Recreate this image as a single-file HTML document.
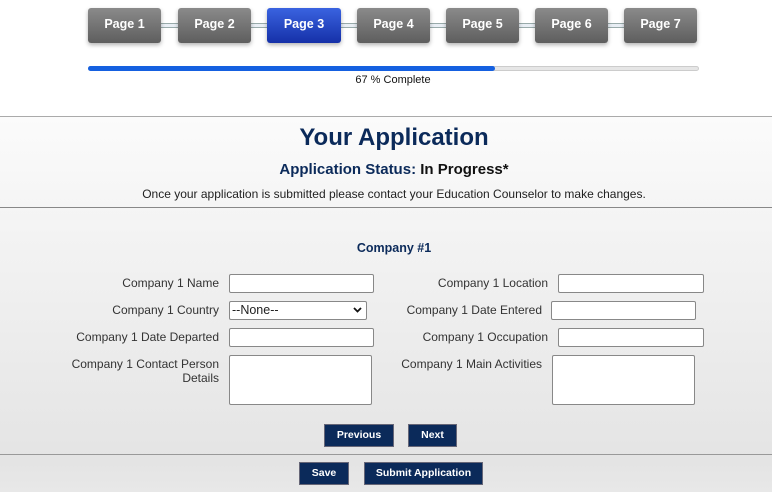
<!DOCTYPE html>
<html><head><style>
*{box-sizing:border-box;margin:0;padding:0}
body{width:772px;height:492px;position:relative;background:#fff;font-family:"Liberation Sans",Arial,sans-serif;overflow:hidden;color:#222}
.pg{position:absolute;top:8px;width:73px;height:35px;border-radius:3px;background:linear-gradient(#8a8a8a,#5e5e5e);color:#fff;font-size:12.5px;font-weight:bold;text-align:center;line-height:32px;box-shadow:0 2px 4px rgba(0,0,0,.3)}
.pg.a{background:linear-gradient(#3a63e0,#1530a8)}
.cn{position:absolute;top:23px;height:5px;border-top:1px solid #9aa;border-bottom:1px solid #9aa;background:#e8eef4}
.a1{position:absolute}
.lbl{position:absolute;font-size:12px;color:#333;text-align:right}
.in{position:absolute;height:19px;background:#fff;border:1px solid #888;border-radius:2px}
.btn{position:absolute;background:#0b2a5a;color:#fff;font-size:10.5px;font-weight:bold;text-align:center;border:1px solid #667;line-height:21px}
</style></head><body>
<div class="cn" style="left:160px;width:18px"></div>
<div class="cn" style="left:250px;width:18px"></div>
<div class="cn" style="left:340px;width:18px"></div>
<div class="cn" style="left:430px;width:18px"></div>
<div class="cn" style="left:519px;width:18px"></div>
<div class="cn" style="left:608px;width:18px"></div>
<div class="pg" style="left:88px">Page 1</div>
<div class="pg" style="left:178px">Page 2</div>
<div class="pg a" style="left:267px;width:74px">Page 3</div>
<div class="pg" style="left:357px">Page 4</div>
<div class="pg" style="left:446px">Page 5</div>
<div class="pg" style="left:535px">Page 6</div>
<div class="pg" style="left:624px">Page 7</div>
<div class="a1" style="left:88px;top:66px;width:611px;height:5px;border-radius:3px;background:#e6e6e6;border:1px solid #ccc"></div>
<div class="a1" style="left:88px;top:66px;width:407px;height:5px;border-radius:3px;background:#1560e0"></div>
<div class="a1" style="left:0;top:74px;width:786px;text-align:center;font-size:11px;color:#111">67 % Complete</div>
<div class="a1" style="left:0;top:116px;width:772px;height:376px;background:linear-gradient(#fbfbfb,#e4e4e4 92%,#e8e8e8);border-top:1px solid #aaa"></div>
<div class="a1" style="left:0;top:207px;width:772px;height:1px;background:#888"></div>
<div class="a1" style="left:0;top:454px;width:772px;height:1px;background:#999"></div>
<div class="a1" style="left:0;top:124px;width:788px;text-align:center;font-size:24px;font-weight:bold;color:#0b2a5a">Your Application</div>
<div class="a1" style="left:0;top:161px;width:788px;text-align:center;font-size:15px;font-weight:bold;color:#0b2a5a">Application Status: <span style="color:#111">In Progress*</span></div>
<div class="a1" style="left:0;top:187px;width:788px;text-align:center;font-size:12px;color:#222">Once your application is submitted please contact your Education Counselor to make changes.</div>
<div class="a1" style="left:0;top:241px;width:788px;text-align:center;font-size:12.5px;font-weight:bold;color:#0b2a5a">Company #1</div>
<div class="lbl" style="right:553px;top:276px">Company 1 Name</div>
<div class="lbl" style="right:553px;top:303px">Company 1 Country</div>
<div class="lbl" style="right:553px;top:330px">Company 1 Date Departed</div>
<div class="lbl" style="right:553px;top:357px;line-height:14px">Company 1 Contact Person<br>Details</div>
<div class="lbl" style="right:224px;top:276px">Company 1 Location</div>
<div class="lbl" style="right:230px;top:303px">Company 1 Date Entered</div>
<div class="lbl" style="right:224px;top:330px">Company 1 Occupation</div>
<div class="lbl" style="right:230px;top:357px">Company 1 Main Activities</div>
<div class="in" style="left:229px;top:274px;width:145px"></div>
<div class="in" style="left:229px;top:301px;width:138px;font-size:12.5px;padding-left:2px;line-height:16px">--None--<svg style="position:absolute;right:4px;top:5px" width="9" height="6" viewBox="0 0 9 6"><path d="M1 1l3.5 3.5L8 1" stroke="#111" stroke-width="1.8" fill="none"/></svg></div>
<div class="in" style="left:229px;top:328px;width:145px"></div>
<div class="in" style="left:229px;top:355px;width:143px;height:50px"></div>
<div class="in" style="left:558px;top:274px;width:146px"></div>
<div class="in" style="left:551px;top:301px;width:145px"></div>
<div class="in" style="left:558px;top:328px;width:146px"></div>
<div class="in" style="left:552px;top:355px;width:143px;height:50px"></div>
<div class="btn" style="left:324px;top:424px;width:70px;height:23px">Previous</div>
<div class="btn" style="left:408px;top:424px;width:49px;height:23px">Next</div>
<div class="btn" style="left:299px;top:462px;width:50px;height:23px">Save</div>
<div class="btn" style="left:364px;top:462px;width:119px;height:23px">Submit Application</div>
</body></html>
